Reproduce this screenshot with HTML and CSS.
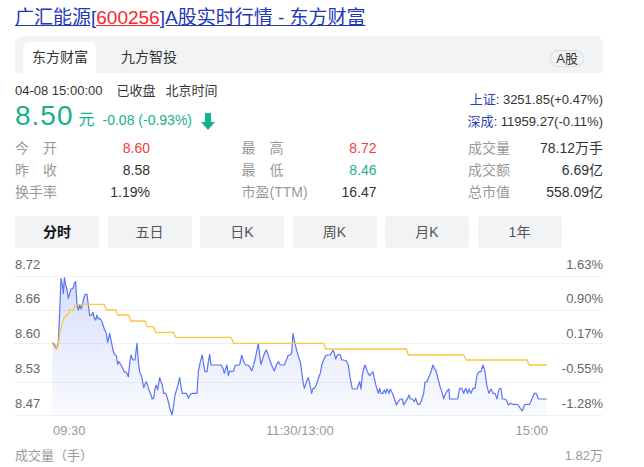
FILE: index.html
```html
<!DOCTYPE html>
<html>
<head>
    <title>广汇能源(600256)行情</title>
    <link rel="stylesheet" href="styles.css">
</head>
<body>
    <div class="page">
        <h1 class="title"><a href="#">广汇能源[<span class="code">600256</span>]A股实时行情 - 东方财富</a></h1>

        <!-- 来源切换 -->
        <div class="src-bar">
            <div class="src-tabs">
                <span class="src-tab active">东方财富</span>
                <span class="src-tab">九方智投</span>
            </div>
            <span class="market-tag">A股</span>
        </div>

        <!-- 报价 -->
        <div class="quote-head">
            <div class="quote-main">
                <div class="quote-time"><span>04-08 15:00:00</span><span class="state">已收盘</span><span>北京时间</span></div>
                <div class="quote-price">
                    <span class="price down">8.50</span>
                    <span class="unit down">元</span>
                    <span class="change down">-0.08 (-0.93%)</span>
                    <svg class="arrow" viewBox="0 0 14 17"><path d="M4 0h6v9h4l-7 8-7-8h4z" fill="#17b08b"/></svg>
                </div>
            </div>
            <div class="indexes">
                <div><a class="idx-name" href="#">上证</a>: 3251.85(+0.47%)</div>
                <div><a class="idx-name" href="#">深成</a>: 11959.27(-0.11%)</div>
            </div>
        </div>

        <div class="stats">
            <div class="stat"><span class="stat-label">今　开</span><span class="up">8.60</span></div>
            <div class="stat"><span class="stat-label">最　高</span><span class="up">8.72</span></div>
            <div class="stat"><span class="stat-label">成交量</span><span>78.12万手</span></div>
            <div class="stat"><span class="stat-label">昨　收</span><span>8.58</span></div>
            <div class="stat"><span class="stat-label">最　低</span><span class="down">8.46</span></div>
            <div class="stat"><span class="stat-label">成交额</span><span>6.69亿</span></div>
            <div class="stat"><span class="stat-label">换手率</span><span>1.19%</span></div>
            <div class="stat"><span class="stat-label">市盈(TTM)</span><span>16.47</span></div>
            <div class="stat"><span class="stat-label">总市值</span><span>558.09亿</span></div>
        </div>

        <div class="periods">
            <span class="period active">分时</span>
            <span class="period">五日</span>
            <span class="period">日K</span>
            <span class="period">周K</span>
            <span class="period">月K</span>
            <span class="period">1年</span>
        </div>

        <!-- 分时图 -->
        <svg class="chart" width="588" height="185" viewBox="0 0 588 185">
            <defs>
                <linearGradient id="area" x1="0" y1="0" x2="0" y2="1">
                    <stop offset="0" stop-color="#5a75f2" stop-opacity="0.24"/>
                    <stop offset="1" stop-color="#5a75f2" stop-opacity="0.03"/>
                </linearGradient>
            </defs>
            <line class="grid" x1="0" y1="21.5" x2="588" y2="21.5"/>
            <line class="grid" x1="0" y1="55.5" x2="588" y2="55.5"/>
            <line class="grid" x1="0" y1="88.5" x2="588" y2="88.5"/>
            <line class="grid" x1="0" y1="127.5" x2="588" y2="127.5"/>
            <line class="grid" x1="0" y1="160.5" x2="588" y2="160.5"/>

            <text class="axis" x="0" y="13.5">8.72</text>
            <text class="axis" x="0" y="48">8.66</text>
            <text class="axis" x="0" y="83">8.60</text>
            <text class="axis" x="0" y="118">8.53</text>
            <text class="axis" x="0" y="153">8.47</text>
            <text class="axis" x="588" y="13.5" text-anchor="end">1.63%</text>
            <text class="axis" x="588" y="48" text-anchor="end">0.90%</text>
            <text class="axis" x="588" y="83" text-anchor="end">0.17%</text>
            <text class="axis" x="588" y="118" text-anchor="end">-0.55%</text>
            <text class="axis" x="588" y="153" text-anchor="end">-1.28%</text>

            <g transform="translate(30 10) scale(0.33333)">
                <polygon class="area" points="22,233 28,238 34,252 40,232 44,140 48,40 52,60 55,85 58,38 62,60 66,75 70,100 74,85 78,72 84,70 88,55 92,50 96,120 100,135 104,120 108,132 112,120 116,100 120,88 126,88 130,120 134,152 140,150 144,142 148,160 152,165 156,150 160,162 164,160 170,168 174,180 178,192 184,205 188,232 194,205 200,235 204,255 208,268 214,272 218,298 222,290 228,300 234,312 238,320 244,322 250,335 254,295 258,270 262,282 266,285 270,285 276,235 280,290 284,320 290,335 296,368 300,358 304,350 308,362 312,375 318,390 322,402 326,400 330,370 334,360 338,375 344,338 348,350 352,360 356,385 362,385 366,395 370,410 374,430 378,440 381,450 386,420 390,390 396,370 400,355 404,338 408,365 412,385 418,385 424,385 430,400 436,388 442,385 450,385 456,385 460,320 466,290 472,270 476,300 480,320 486,320 490,290 494,268 498,300 504,300 510,300 520,300 528,300 534,310 538,325 542,312 546,300 550,332 554,318 560,320 566,318 570,302 578,300 584,300 590,270 596,290 602,300 608,300 614,305 620,318 626,300 632,275 636,255 640,235 644,272 648,298 652,285 656,272 660,262 664,255 670,272 676,290 682,305 688,318 694,300 700,290 706,300 712,300 718,300 724,285 730,270 736,270 740,265 744,205 750,235 756,260 760,275 766,290 770,320 774,350 778,370 782,358 786,345 790,338 794,355 800,385 804,370 808,370 814,360 820,340 826,325 830,300 836,285 842,272 848,270 856,270 860,262 864,256 868,265 872,282 876,272 880,268 886,270 890,285 896,285 904,288 910,300 914,330 918,352 922,372 930,372 936,372 940,360 944,350 948,372 952,330 956,312 960,300 964,310 968,322 974,332 980,325 984,320 988,340 992,358 996,372 1000,385 1004,370 1008,385 1014,385 1018,375 1022,385 1026,372 1032,385 1036,372 1042,385 1048,400 1054,420 1060,410 1066,402 1072,402 1076,420 1082,410 1088,400 1092,390 1096,402 1102,402 1108,410 1112,400 1118,418 1124,418 1130,405 1136,385 1140,352 1146,350 1152,335 1158,320 1164,300 1168,310 1174,320 1180,345 1186,368 1192,385 1196,402 1200,390 1206,378 1212,372 1214,402 1220,402 1230,402 1238,402 1244,370 1250,370 1256,385 1262,370 1268,385 1272,372 1278,385 1284,370 1290,370 1296,330 1302,320 1308,320 1314,300 1320,320 1326,365 1332,385 1338,372 1344,385 1350,385 1356,402 1362,372 1368,370 1372,402 1378,402 1384,405 1390,420 1396,415 1402,418 1408,418 1414,418 1420,420 1426,430 1432,438 1438,420 1444,418 1454,418 1462,400 1468,385 1474,385 1480,402 1490,402 1505,402 1505,452 22,452"/>
                <polyline class="price-line" points="22,233 28,238 34,252 40,232 44,140 48,40 52,60 55,85 58,38 62,60 66,75 70,100 74,85 78,72 84,70 88,55 92,50 96,120 100,135 104,120 108,132 112,120 116,100 120,88 126,88 130,120 134,152 140,150 144,142 148,160 152,165 156,150 160,162 164,160 170,168 174,180 178,192 184,205 188,232 194,205 200,235 204,255 208,268 214,272 218,298 222,290 228,300 234,312 238,320 244,322 250,335 254,295 258,270 262,282 266,285 270,285 276,235 280,290 284,320 290,335 296,368 300,358 304,350 308,362 312,375 318,390 322,402 326,400 330,370 334,360 338,375 344,338 348,350 352,360 356,385 362,385 366,395 370,410 374,430 378,440 381,450 386,420 390,390 396,370 400,355 404,338 408,365 412,385 418,385 424,385 430,400 436,388 442,385 450,385 456,385 460,320 466,290 472,270 476,300 480,320 486,320 490,290 494,268 498,300 504,300 510,300 520,300 528,300 534,310 538,325 542,312 546,300 550,332 554,318 560,320 566,318 570,302 578,300 584,300 590,270 596,290 602,300 608,300 614,305 620,318 626,300 632,275 636,255 640,235 644,272 648,298 652,285 656,272 660,262 664,255 670,272 676,290 682,305 688,318 694,300 700,290 706,300 712,300 718,300 724,285 730,270 736,270 740,265 744,205 750,235 756,260 760,275 766,290 770,320 774,350 778,370 782,358 786,345 790,338 794,355 800,385 804,370 808,370 814,360 820,340 826,325 830,300 836,285 842,272 848,270 856,270 860,262 864,256 868,265 872,282 876,272 880,268 886,270 890,285 896,285 904,288 910,300 914,330 918,352 922,372 930,372 936,372 940,360 944,350 948,372 952,330 956,312 960,300 964,310 968,322 974,332 980,325 984,320 988,340 992,358 996,372 1000,385 1004,370 1008,385 1014,385 1018,375 1022,385 1026,372 1032,385 1036,372 1042,385 1048,400 1054,420 1060,410 1066,402 1072,402 1076,420 1082,410 1088,400 1092,390 1096,402 1102,402 1108,410 1112,400 1118,418 1124,418 1130,405 1136,385 1140,352 1146,350 1152,335 1158,320 1164,300 1168,310 1174,320 1180,345 1186,368 1192,385 1196,402 1200,390 1206,378 1212,372 1214,402 1220,402 1230,402 1238,402 1244,370 1250,370 1256,385 1262,370 1268,385 1272,372 1278,385 1284,370 1290,370 1296,330 1302,320 1308,320 1314,300 1320,320 1326,365 1332,385 1338,372 1344,385 1350,385 1356,402 1362,372 1368,370 1372,402 1378,402 1384,405 1390,420 1396,415 1402,418 1408,418 1414,418 1420,420 1426,430 1432,438 1438,420 1444,418 1454,418 1462,400 1468,385 1474,385 1480,402 1490,402 1505,402"/>
                <polyline class="avg-line" points="22,233 28,245 34,252 40,240 44,205 50,178 56,162 62,152 68,150 74,135 86,135 90,120 96,118 178,118 184,135 212,135 218,150 250,150 258,168 300,168 306,185 326,185 332,202 386,202 392,217 558,217 566,235 836,235 842,252 1084,252 1090,270 1256,270 1264,285 1446,285 1452,300 1505,300"/>
            </g>

            <text class="time" x="38" y="180">09:30</text>
            <text class="time" x="251" y="180">11:30/13:00</text>
            <text class="time" x="533" y="180" text-anchor="end">15:00</text>
        </svg>

        <div class="vol-head">
            <span>成交量（手）</span>
            <span>1.82万</span>
        </div>
    </div>
</body>
</html>
```

FILE: styles.css
```css
body {
    margin: 0;
    font-family: "Liberation Sans", Arial, "Noto Sans CJK SC", sans-serif;
    color: #333;
    background: #fff;
}

.page {
    width: 588px;
    margin-left: 15px;
    padding-top: 6px;
}

.title {
    margin: 0;
    font-size: 19px;
    line-height: 24px;
    font-weight: normal;
}

.title a {
    color: #2238b5;
    text-decoration: underline;
}

.title .code {
    color: #f2282d;
    text-decoration: underline;
}

/* 来源切换 */
.src-bar {
    margin-top: 6px;
    height: 37px;
    background: #f2f3f5;
    border-radius: 8px 8px 0 0;
    display: flex;
    align-items: flex-end;
    justify-content: space-between;
    padding: 0 19px 0 8px;
    box-sizing: border-box;
}

.src-tabs {
    display: flex;
    gap: 16px;
}

.src-tab {
    height: 31px;
    line-height: 31px;
    padding: 0 8px 0 9px;
    font-size: 14px;
    color: #333;
    border-radius: 6px 6px 0 0;
}

.src-tab.active {
    background: #fff;
}

.market-tag {
    margin-bottom: 6px;
    padding: 0 5px;
    font-size: 13px;
    line-height: 15px;
    color: #333;
    border: 1px solid #d9dadd;
    border-radius: 9px;
}

/* 报价 */
.quote-head {
    display: flex;
    justify-content: space-between;
    margin-top: 9px;
}

.quote-time {
    font-size: 13px;
    line-height: 18px;
}

.quote-time .state {
    margin: 0 10px 0 14px;
}

.quote-price {
    display: flex;
    align-items: baseline;
    height: 32px;
}

.price {
    font-size: 28px;
    line-height: 32px;
    letter-spacing: 1px;
}

.unit {
    font-size: 16px;
    margin-left: 5px;
}

.change {
    font-size: 14px;
    margin-left: 8px;
}

.arrow {
    width: 14px;
    height: 17px;
    margin-left: 9px;
    align-self: flex-end;
    margin-bottom: 2px;
}

.down {
    color: #17b08b;
}

.up {
    color: #f23c3c;
}

.indexes {
    margin-top: 7px;
    font-size: 13px;
    line-height: 21.5px;
    text-align: right;
}

.idx-name {
    color: #2c3fb0;
    text-decoration: none;
}

.stats {
    display: grid;
    grid-template-columns: repeat(3, 135px);
    column-gap: 91.5px;
    margin-top: 5px;
    font-size: 14px;
    line-height: 22px;
}

.stat {
    display: flex;
    justify-content: space-between;
}

.stat-label {
    color: #999;
}

.periods {
    display: flex;
    gap: 8.5px;
    margin-top: 13px;
}

.period {
    width: 84px;
    height: 32px;
    line-height: 32px;
    text-align: center;
    background: #f2f3f5;
    border-radius: 4px;
    font-size: 14px;
    color: #555;
}

.period.active {
    color: #111;
    font-weight: bold;
}

/* 分时图 */
.chart {
    display: block;
    margin-top: 7px;
    font-family: "Liberation Sans", Arial, sans-serif;
}

.chart .grid {
    stroke: #f0f1f3;
    stroke-width: 1;
}

.chart .axis {
    font-size: 13px;
    fill: #666;
}

.chart .time {
    font-size: 13px;
    fill: #999;
}

.chart .area {
    fill: url(#area);
}

.chart .price-line {
    fill: none;
    stroke: #5a75f2;
    stroke-width: 1.2;
    vector-effect: non-scaling-stroke;
    stroke-linejoin: round;
}

.chart .avg-line {
    fill: none;
    stroke: #fcc63f;
    stroke-width: 1.3;
    vector-effect: non-scaling-stroke;
}

.vol-head {
    display: flex;
    justify-content: space-between;
    margin-top: 7px;
    font-size: 13px;
    line-height: 18px;
    color: #999;
}
```
